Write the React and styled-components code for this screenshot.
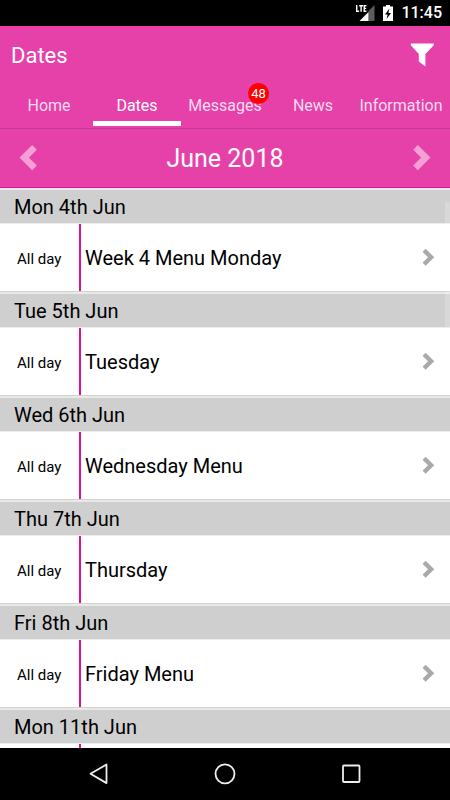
import styled, { createGlobalStyle, css } from "styled-components";

const tabs = [
    { name: "Home" },
    { name: "Dates", active: true },
    { name: "Messages", unread: 48 },
    { name: "News" },
    { name: "Information" },
];

const days = [
    { date: "Mon 4th Jun", time: "All day", event: "Week 4 Menu Monday" },
    { date: "Tue 5th Jun", time: "All day", event: "Tuesday" },
    { date: "Wed 6th Jun", time: "All day", event: "Wednesday Menu" },
    { date: "Thu 7th Jun", time: "All day", event: "Thursday" },
    { date: "Fri 8th Jun", time: "All day", event: "Friday Menu" },
    { date: "Mon 11th Jun", time: "", event: "" },
];

export default function App() {
    return (
        <StyledScreen>
            <GlobalStyle />
            <StyledStatusBar>
                <SignalIcon />
                <BatteryIcon />
                <StyledClock>11:45</StyledClock>
            </StyledStatusBar>
            <StyledHeader>
                <StyledTitleRow>
                    <StyledTitle>Dates</StyledTitle>
                    <StyledIconButton type="button" aria-label="Filter">
                        <svg width="24" height="24" viewBox="0 0 24 24" fill="#fff">
                            <path d="M.8.400h23v1.800L15.400 11V23.600l-6.600-5V11L.8 2.200z" />
                        </svg>
                    </StyledIconButton>
                </StyledTitleRow>
                <StyledTabs>
                    {tabs.map((tab) => (
                        <StyledTab key={tab.name} href="#" $active={tab.active}>
                            {tab.name}
                            {tab.unread && <StyledBadge>{tab.unread}</StyledBadge>}
                        </StyledTab>
                    ))}
                </StyledTabs>
            </StyledHeader>
            <StyledMonthBar>
                <StyledIconButton type="button" aria-label="Previous month">
                    <Chevron size={28} color="#f4a0d6" left />
                </StyledIconButton>
                <StyledMonth>June 2018</StyledMonth>
                <StyledIconButton type="button" aria-label="Next month">
                    <Chevron size={28} color="#f4a0d6" />
                </StyledIconButton>
            </StyledMonthBar>
            <StyledList>
                {days.map((day) => (
                    <section key={day.date}>
                        <StyledDate>{day.date}</StyledDate>
                        <StyledEvent type="button" aria-label={day.event || day.date}>
                            <StyledTime>{day.time}</StyledTime>
                            <StyledName>{day.event}</StyledName>
                            <Chevron size={19} color="#a9a9a9" />
                        </StyledEvent>
                    </section>
                ))}
                <StyledScrollThumb />
            </StyledList>
            <StyledNavBar>
                <StyledNavButton type="button" aria-label="Back">
                    <svg width="22" height="22" viewBox="0 0 22 22">
                        <path d="M18.500 1.500v18.600L2.500 10.800z" />
                    </svg>
                </StyledNavButton>
                <StyledNavButton type="button" aria-label="Home screen">
                    <svg width="22" height="22" viewBox="0 0 22 22">
                        <circle cx="11" cy="10.800" r="9.500" />
                    </svg>
                </StyledNavButton>
                <StyledNavButton type="button" aria-label="Recent apps">
                    <svg width="22" height="22" viewBox="0 0 22 22">
                        <rect x="3" y="2.500" width="16.500" height="16.500" rx="1" />
                    </svg>
                </StyledNavButton>
            </StyledNavBar>
        </StyledScreen>
    );
}

function Chevron({ size, color, left }) {
    return (
        <svg width={size} height={size} viewBox="0 0 28 28" fill="none" stroke={color} strokeWidth="6.6">
            <path d={left ? "M20.500 3.300L10.200 13.600l10.300 10.300" : "M7.500 3.300l10.300 10.300L7.500 23.900"} />
        </svg>
    );
}

function SignalIcon() {
    return (
        <svg width="20" height="18" viewBox="0 0 20 18">
            <path d="M19.500 1v16h-6V7z" fill="#5c5c5c" />
            <path d="M4.500 17l9-9v9z" fill="#fff" />
            <path d="M1.700 1v6.200h2.400M4.200 1.700h3.800M6.100 1.700v6M11.400 1.700H9.200v5.500h2.200M9.200 4.400h2" fill="none" stroke="#fff" strokeWidth="1.4" />
        </svg>
    );
}

function BatteryIcon() {
    return (
        <svg width="10" height="18" viewBox="0 0 10 18">
            <path d="M3 1h4v1.600h3V17H0V2.600h3z" fill="#fff" />
            <path d="M6.400 4.400L2 10.400h2.600L3.600 15 8 9H5.400z" fill="#000" />
        </svg>
    );
}

const GlobalStyle = createGlobalStyle`
    * {
        box-sizing: border-box;
    }

    body {
        margin: 0;
        font-family: Roboto, "Liberation Sans", sans-serif;
        background-color: #fff;
        color: #000;
    }

    button {
        font: inherit;
        color: inherit;
        background: none;
        border: none;
        padding: 0;
        cursor: pointer;
    }

    svg {
        display: block;
        flex-shrink: 0;
    }
`;

const StyledScreen = styled.div`
    display: flex;
    flex-direction: column;
    height: 100vh;
`;

const StyledStatusBar = styled.div`
    display: flex;
    flex-shrink: 0;
    align-items: center;
    justify-content: flex-end;
    gap: 8px;
    height: 26px;
    padding: 0 8px;
    background-color: #000;
`;

const StyledClock = styled.span`
    font-size: 16px;
    line-height: 28px;
    font-weight: 500;
    color: #fff;
`;

const StyledHeader = styled.header`
    flex-shrink: 0;
    background-color: #e640a9;
    border-bottom: 1px solid #c23a90;
    color: #fff;
`;

const StyledTitleRow = styled.div`
    display: flex;
    align-items: center;
    justify-content: space-between;
    height: 58px;
    padding: 0 16px 0 11px;
`;

const StyledTitle = styled.h1`
    margin: 0;
    font-size: 22px;
    font-weight: 400;
`;

const StyledIconButton = styled.button`
    display: flex;
`;

const StyledTabs = styled.nav`
    display: grid;
    grid-template-columns: repeat(5, 1fr);
    padding: 0 5px 2px;
`;

const StyledTab = styled.a`
    position: relative;
    height: 42px;
    line-height: 44px;
    font-size: 16px;
    text-align: center;
    text-decoration: none;
    color: #fbdcf0;

    ${({ $active }) =>
        $active &&
        css`
            color: #fff;
            box-shadow: inset 0 -5px #fff;
        `}
`;

const StyledBadge = styled.span`
    position: absolute;
    top: -1px;
    right: 0;
    width: 21px;
    height: 21px;
    border-radius: 50%;
    background-color: #f00;
    color: #fff;
    font-size: 13px;
    line-height: 22px;
`;

const StyledMonthBar = styled.div`
    display: flex;
    flex-shrink: 0;
    align-items: center;
    justify-content: space-between;
    height: 59px;
    padding: 0 14px;
    background-color: #e640a9;
    border-bottom: 1px solid #e0109a;
    color: #fff;
`;

const StyledMonth = styled.h2`
    margin: 0;
    font-size: 25px;
    font-weight: 400;
`;

const StyledList = styled.main`
    position: relative;
    flex: 1;
    min-height: 0;
    overflow: hidden;
`;

const StyledDate = styled.h3`
    height: 36px;
    margin: 0;
    padding-left: 14px;
    border-top: 2px solid #e8e8e8;
    border-bottom: 1px solid #ececec;
    background-color: #cfcfcf;
    font-size: 20px;
    line-height: 34px;
    font-weight: 400;
`;

const StyledEvent = styled.button`
    display: flex;
    align-items: center;
    width: 100%;
    height: 68px;
    padding-right: 12px;
    border-bottom: 1px solid #d0d0d0;
    text-align: left;
`;

const StyledTime = styled.span`
    width: 81px;
    height: 100%;
    padding-left: 17px;
    border-right: 2px solid #e0109a;
    font-size: 15px;
    line-height: 70px;
`;

const StyledName = styled.span`
    flex: 1;
    padding-left: 4px;
    font-size: 20px;
    line-height: 70px;
`;

const StyledScrollThumb = styled.div`
    position: absolute;
    top: 14px;
    right: 0;
    width: 5px;
    height: 125px;
    background-color: rgba(255, 255, 255, 0.2);
`;

const StyledNavBar = styled.footer`
    display: flex;
    flex-shrink: 0;
    align-items: center;
    justify-content: center;
    height: 52px;
    background-color: #000;
`;

const StyledNavButton = styled.button`
    display: flex;
    justify-content: center;
    width: 28%;

    svg {
        fill: none;
        stroke: #eee;
        stroke-width: 1.8;
        stroke-linejoin: round;
    }
`;
